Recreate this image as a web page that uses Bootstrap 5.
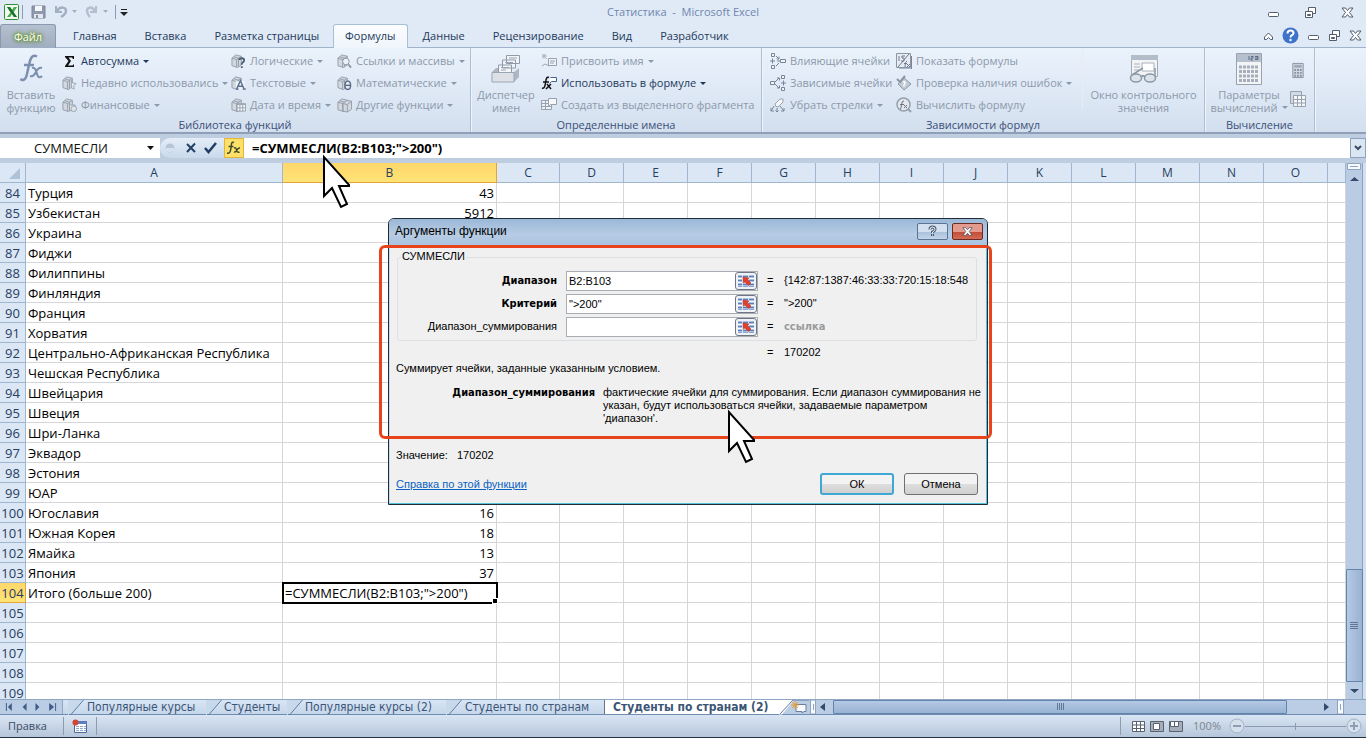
<!DOCTYPE html>
<html lang="ru">
<head>
<meta charset="utf-8">
<meta name="viewport" content="width=device-width, initial-scale=1">
<title>Статистика - Microsoft Excel</title>
<link href="https://cdn.jsdelivr.net/npm/bootstrap@5.3.0/dist/css/bootstrap.min.css" rel="stylesheet">
<style>
  body { font: 11px/16px "Open Sans", "Noto Sans", sans-serif; color: #1e395b; background: #dfeaf6; white-space: nowrap; }
  button, input { font: inherit; color: inherit; border: 0; background: none; padding: 0; }
  svg { display: block; flex: none; }
  a { color: inherit; text-decoration: none; }

  /* title bar and ribbon tabs */
  .titlebar { height: 24px; color: #7186ae; }
  .vline { width: 1px; background: #8d9bb0; }
  .bar-14 { height: 14px; } .bar-18 { height: 18px; }
  .winset { gap: 24px; padding-right: 12px; }
  .tabsrow { height: 24px; border-bottom: 1px solid #9fb4cc; }
  .rtab { height: 24px; line-height: 22px; padding: 0 13px; border: 1px solid transparent; border-bottom: 0; color: #1e395b; }
  .filetab { width: 56px; padding: 0; margin-right: 3px; text-align: center; border-radius: 3px 3px 0 0; color: #fff; border-color: #8a99ae;
    background: linear-gradient(#b5c0d0, #a0adc0); text-shadow: 0 0 3px #5b8a1c, 0 0 4px #5b8a1c, 0 0 5px #6c9a2c; }
  .rtab.current { padding: 0 11px; margin: 0 1px 0 0; background: linear-gradient(#fbfdff, #eff5fc); border-color: #a9bdd4; border-radius: 3px 3px 0 0; }

  /* ribbon */
  .ribbon { height: 86px; background: linear-gradient(#eaf2fb, #dfe9f6 50%, #d3dfee); border-bottom: 2px solid #8f9fb7; }
  .rgroup { border-right: 1px solid #aebfd4; box-shadow: 1px 0 #eef4fb; }
  .rbody { height: 69px; padding-top: 2px; }
  .rname { height: 15px; text-align: center; color: #3a5078; }
  .cmd { display: flex; align-items: center; gap: 4px; height: 22px; color: #8c99aa; }
  .cmd.on { color: #1e395b; }
  .big { display: flex; flex-direction: column; align-items: center; color: #8c99aa; line-height: 13px; }
  .big svg { margin: 3px 0 3px; }
  .arr::after { content: ""; border: 3px solid transparent; border-top-color: currentColor; border-bottom: 0; }
  .c-62 { width: 62px; } .c-170 { width: 169px; } .c-106 { width: 106px; } .c-133 { width: 133px; } .c-70 { width: 70px; } .c-220 { width: 220px; }
  .c-126 { width: 126px; } .c-186 { width: 187px; } .c-120 { width: 121px; } .c-80 { width: 80px; }

  /* formula bar */
  .fbar { height: 29px; background: #bfcde0; padding: 4px 0 5px; }
  .fbar > * { height: 20px; }
  .namebox { width: 160px; background: #fff; font-size: 13px; color: #111; }
  .namebox input { width: 142px; text-align: center; color: #111; }
  .fbtns { width: 84px; gap: 7px; background: linear-gradient(#e4edf8, #c9d9ec); border-right: 1px solid #8ea2bd; border-radius: 10px 0 0 10px; }
  .fxbtn { width: 20px; height: 20px; background: #ffe069; border: 1px solid #e3b53d; }
  .ftext { background: #fff; font-size: 13px; font-weight: 700; color: #000; padding: 0 8px; }
  .expand { border: 1px solid #8fa3be; background: #dbe6f3; }

  /* grid */
  .sheet { font-size: 13px; background: #fff; min-height: 0; }
  .cells { table-layout: fixed; width: 100%; border-collapse: separate; border-spacing: 0; line-height: 18px; color: #000; }
  .cells th { height: 20px; font-weight: 400; text-align: center; color: #27405f; background: #dbe7f5; border-right: 1px solid #9eb6ce; border-bottom: 1px solid #9eb6ce; padding: 1px 0 0; }
  .cells thead th { font-size: 12px; }
  .cells td { height: 20px; border-right: 1px solid #d4d6d9; border-bottom: 1px solid #d4d6d9; padding: 1px 2px 0; }
  .cells .picked { background: linear-gradient(#ffd76b, #ffe376); border-color: #e3a53a; }
  .cells .editing { outline: 2px solid #000; outline-offset: -1px; position: relative; }
  .knob { right: -2px; bottom: -2px; width: 4px; height: 4px; background: #000; border: 1px solid #fff; box-sizing: content-box; }
  .vbar { width: 20px; background: #b9cce4; border-right: 3px solid #d3e0f0; box-shadow: inset -1px 0 #8ba3c2; }
  .thumb { background: linear-gradient(90deg, #b4c9e4, #99b3d3); border: 1px solid #6484ab; border-radius: 1px; }
  .vthumb { height: 113px; }

  /* sheet tabs and status bar */
  .sheetbar { height: 16px; background: #bacde4; color: #3b5577; border-top: 1px solid #8fa7c4; border-bottom: 1px solid #6f8bb0; }
  .sheetnav { width: 63px; border-right: 1px solid #8fa7c4; }
  .stab { color: #3b5577; display: flex; gap: 2px; font: 12px/15px "DejaVu Sans Condensed", sans-serif; background: linear-gradient(#d8e5f4, #c6d7eb); }
  .stab.current { background: #fff; font-weight: 700; }
  .t-143 { width: 143px; } .t-81 { width: 81px; } .t-158 { width: 158px; } .t-160 { width: 160px; } .t-174 { width: 174px; }
  .hthumb { width: 454px; background: linear-gradient(#b4c9e4, #99b3d3); }
  .status { height: 23px; background: linear-gradient(#d9e5f3, #b6c6da); border-bottom: 1px solid #26303f; color: #3b4c66; }
  .zoomline { width: 101px; height: 20px; }
  .zoomtext { color: #7c858f; }

  /* function dialog */
  .dlg { left: 388px; top: 218px; width: 600px; height: 287px; font: 11px/13px "Liberation Sans", sans-serif; color: #000; background: #f0f0f0;
    border: 1px solid #222c38; border-radius: 6px 6px 0 0; box-shadow: inset -1px -1px #53c3dc, inset 1px 0 #c7d9ec; }
  .dlghead { height: 26px; background: linear-gradient(#9bb8d8, #b7cce4 60%, #a9c3e0); border-radius: 5px 5px 0 0; font: 12px/26px "Liberation Sans", sans-serif; padding: 0 4px 2px 6px; }
  .winbtn { width: 31px; height: 17px; border: 1px solid #5b7493; border-radius: 2px; background: linear-gradient(#d2e0ef 50%, #a6bfdb 50%, #c2d5e9); color: #fff; }
  .winbtn.red { background: linear-gradient(#e49a8d 50%, #c24a35 50%, #d36b53); border-color: #6a2b24; }
  .argbox { margin: 12px 10px 0 8px; height: 84px; border: 1px solid #dcdfe4; border-radius: 3px; padding-top: 11px; }
  .arglegend { left: 3px; top: -8px; background: #f0f0f0; padding: 0 1px; }
  .argrow { display: flex; align-items: center; height: 23px; }
  .argrow label, .argdesc b, .argrow .gray { font-family: "DejaVu Sans Condensed", sans-serif; }
  .argrow label { width: 159px; text-align: right; margin-right: 9px; font-weight: 700; }
  .argrow label.opt { font: inherit; }
  .argfield { width: 192px; height: 20px; border: 1px solid #a9adb5; background: #fff; }
  .argfield input { width: 168px; padding: 1px 2px 0; }
  .pick { width: 22px; height: 18px; border: 1px solid #6d7682; border-radius: 3px; background: #eef1f6; }
  .eq { width: 26px; padding-left: 9px; }
  .gray { color: #9b9b9b; font-weight: 700; }
  .argval { width: 187px; overflow: hidden; }
  .total { padding-top: 5px; } .total span:last-child { width: 203px; }
  .note { margin: 3px 7px 0; }
  .argdesc { margin-top: 11px; } .argdesc b { width: 206px; text-align: right; }
  .result { margin: 24px 7px 0; }
  .dlgfoot { margin: 11px 9px 0 7px; gap: 10px; }
  .helplink { color: #0a62c4; text-decoration: underline; }
  .dlgbtn { width: 74px; height: 22px; border: 1px solid #707070; border-radius: 3px; background: linear-gradient(#f3f3f3 50%, #dedede 50%, #d0d0d0); }
  .dlgbtn.main { border: 2px solid #3fa9d4; }
  .frame { left: -10px; top: 26px; width: 613px; height: 194px; border: 3px solid #e8441c; border-radius: 6px; }
  .pointer1 { left: 320px; top: 153px; }
  .pointer2 { left: 725px; top: 408px; }
</style>
</head>
<body>
<svg width="0" height="0" class="position-absolute" aria-hidden="true">
  <symbol id="book" viewBox="0 0 16 16"><path d="M1 5l4-3.500 6 1.500v9l-4 3L1 13z" fill="#d3d8df" stroke="#929daa"/><path d="M1 5l5 1.500v8.500M6 6.500L11 3M3 3.500l5 1.500v9" fill="none" stroke="#929daa"/></symbol>
  <symbol id="wmin" viewBox="0 0 13 13"><rect x="1.500" y="6.500" width="10" height="4" rx="1" fill="#fff" stroke="#535d6c"/></symbol>
  <symbol id="wres" viewBox="0 0 13 13"><path d="M4.500 1.500h7v6h-7z" fill="#fff" stroke="#535d6c"/><path d="M1.500 5.500h7v6h-7zM3.500 8.500h3v1h-3z" fill="#fff" stroke="#535d6c"/></symbol>
  <symbol id="wclose" viewBox="0 0 13 13"><path d="M1 2h3.500l2 2.500 2-2.500H12L8.500 6.500 12 11H8.500l-2-2.500-2 2.500H1l3.500-4.500z" fill="#fff" stroke="#535d6c"/></symbol>
  <symbol id="refpick" viewBox="0 0 16 14"><path d="M0 1h16v12H0z" fill="#fff"/><path d="M0 2.500h16M0 6.500h16M0 10.500h16" stroke="#5f80bd" stroke-width="2"/><path d="M0 12.500h16" stroke="#8fa6d0"/><path d="M4.500 1v12M10.500 1v12" stroke="#d9e2f2"/><path d="M5 3l6 1-1.500 1.500 3.500 3.500-2.500 2.500-3.500-3.500L5.500 9z" fill="#e2402a" stroke="#b42a18" stroke-width=".5"/></symbol>
  <symbol id="mouse" viewBox="0 0 30 56"><path d="M4 4v39l8-8 9 19 6-3-8-18h11z" fill="#fff" stroke="#000" stroke-width="2"/></symbol>
  <symbol id="slant" viewBox="0 0 16 15"><path d="M2 15L15 0H0v15z" fill="#c9d9ec"/><path d="M1 14.500h2L15.500 0" fill="none" stroke="#5f7ca3"/></symbol>
</svg>

<div class="vh-100 d-flex flex-column overflow-hidden position-relative">
  <header class="titlebar d-flex align-items-center position-relative ps-1 flex-shrink-0">
    <svg width="18" height="18" viewBox="0 0 18 18"><rect x="0.500" y="1.500" width="14" height="15" rx="1" fill="#f1f9ee" stroke="#2f8c3a"/><path d="M3 4h3l2 3 2-3h3L9.500 9.500 13 14h-3L8 11l-2 3H3l3.500-4.500z" fill="#45a84a"/><path d="M3 4h3l7 10h-3z" fill="#1c7031"/></svg>
    <span class="vline bar-14 me-2"></span>
    <svg width="15" height="16" viewBox="0 0 15 16"><path d="M1 2h13v12H1z" fill="#8e99ad" stroke="#7c879b"/><path d="M4 2h7v5H4z" fill="#f5f7fa"/><path d="M3 10h9v4H3z" fill="#e3e8ef"/><path d="M5 11h2v3H5z" fill="#8491a5"/></svg>
    <svg class="ms-2" width="26" height="14" viewBox="0 0 26 14"><path d="M2 1v6h6" fill="none" stroke="#a3b0c2" stroke-width="2"/><path d="M3 6c3-5 9-4 9 0 0 3-2 4-5 6" fill="none" stroke="#a3b0c2" stroke-width="2.500"/><path d="M18 5h5l-2.500 3z" fill="#a3b0c2"/></svg>
    <svg class="ms-1" width="27" height="14" viewBox="0 0 27 14"><path d="M12 1v6H6" fill="none" stroke="#b4bfce" stroke-width="2"/><path d="M11 6C8 1 3 2 3 6c0 3 1 4 3 6" fill="none" stroke="#b4bfce" stroke-width="2.500"/><path d="M19 5h5l-2.500 3z" fill="#a3b0c2"/></svg>
    <span class="vline bar-14 mx-1"></span>
    <svg width="8" height="9" viewBox="0 0 8 9"><path d="M1 1.500h6" stroke="#222"/><path d="M0 4h8l-4 4z" fill="#222"/></svg>
    <span class="position-absolute start-50 translate-middle-x">Статистика &nbsp;-&nbsp; Microsoft Excel</span>
    <div class="winset ms-auto d-flex">
      <button aria-label="Свернуть"><svg width="13" height="13"><use href="#wmin"/></svg></button>
      <button aria-label="Восстановить"><svg width="13" height="13"><use href="#wres"/></svg></button>
      <button aria-label="Закрыть"><svg width="13" height="13"><use href="#wclose"/></svg></button>
    </div>
  </header>

  <nav class="tabsrow d-flex flex-shrink-0">
    <button class="rtab filetab">Файл</button>
    <a class="rtab" href="#">Главная</a><a class="rtab" href="#">Вставка</a><a class="rtab" href="#">Разметка страницы</a>
    <a class="rtab current" href="#">Формулы</a><a class="rtab" href="#">Данные</a><a class="rtab" href="#">Рецензирование</a><a class="rtab" href="#">Вид</a><a class="rtab" href="#">Разработчик</a>
    <div class="ms-auto d-flex align-items-center gap-2 pe-1">
      <button aria-label="Свернуть ленту"><svg width="11" height="10" viewBox="0 0 11 10"><path d="M1.500 6L5.500 2 9.500 6v2.500H7.500l-2-2-2 2H1.500z" fill="#fff" stroke="#535d6c"/></svg></button>
      <button aria-label="Справка"><svg width="17" height="17" viewBox="0 0 17 17"><circle cx="8.500" cy="8.500" r="8" fill="#3f73c9"/><path d="M5.500 6.500q0-3 3-3t3 2.500q0 1.500-1.500 2.200T8.500 10.500" fill="none" stroke="#fff" stroke-width="2"/><circle cx="8.500" cy="13" r="1.200" fill="#fff"/></svg></button>
      <button aria-label="Свернуть окно"><svg width="13" height="13"><use href="#wmin"/></svg></button>
      <button aria-label="Восстановить окно"><svg width="13" height="13"><use href="#wres"/></svg></button>
      <button aria-label="Закрыть окно"><svg width="13" height="13"><use href="#wclose"/></svg></button>
    </div>
  </nav>

  <section class="ribbon d-flex flex-shrink-0">
    <div class="rgroup">
      <div class="rbody d-flex">
        <button class="big c-62"><svg width="28" height="32" viewBox="0 0 28 32"><path d="M20 3.500c-5-3-7 3-8 8.500L9.500 23c-1 4-4 5-6 3M7 12h10" fill="none" stroke="#7c8fae" stroke-width="2.500"/><path d="M15 15c3-1 4 2 5 6s3 4 5 2M25 15c-3-1-5 2-6 4s-3 5-6 4" fill="none" stroke="#7c8fae" stroke-width="2"/></svg>Вставить<br>функцию</button>
        <div class="c-170">
          <button class="cmd on arr"><svg width="15" height="15" viewBox="0 0 15 15"><path d="M3 2h9v3h-1l-1-1.500H6.500L9 7l-3 4.500h4.500L12 10v3H3v-1l3.500-5L3 3z" fill="#111"/></svg>Автосумма</button>
          <button class="cmd arr"><svg width="15" height="16" viewBox="0 0 16 16"><use href="#book"/><path d="M10 5l1.500 3 3.500.5-2.500 2.500.5 3.500-3-1.500z" fill="#e6e9ed" stroke="#98a2af"/></svg>Недавно использовались</button>
          <button class="cmd arr"><svg width="15" height="16" viewBox="0 0 16 16"><use href="#book"/><path d="M8 8h6v6H8z" fill="#e6e9ed" stroke="#98a2af"/><circle cx="12.500" cy="12" r="3" fill="#dfe3e8" stroke="#98a2af"/></svg>Финансовые</button>
        </div>
        <div class="c-106">
          <button class="cmd arr"><svg width="15" height="16" viewBox="0 0 16 16"><use href="#book"/><path d="M9 7q0-2 2.500-2T14 7.500q0 1-1.500 2T11.500 12M11.500 13.500v2" fill="none" stroke="#4d6079" stroke-width="2"/></svg>Логические</button>
          <button class="cmd arr"><svg width="15" height="16" viewBox="0 0 16 16"><use href="#book"/><path d="M5 6h10v9H5z" fill="#eef2f7"/><path d="M6 14.500L10 5.500l4 9M7.500 11.500h5M5 14.500h3M12.500 14.500H16" fill="none" stroke="#5b7096" stroke-width="1.500"/></svg>Текстовые</button>
          <button class="cmd arr"><svg width="15" height="16" viewBox="0 0 16 16"><use href="#book"/><path d="M6.500 6.500h9v8h-9z" fill="#f3f5f7" stroke="#98a2af"/><path d="M6 7.500h10M9.500 8v7M12.500 8v7M7 11h9" stroke="#98a2af"/></svg>Дата и время</button>
        </div>
        <div class="c-133">
          <button class="cmd arr"><svg width="15" height="16" viewBox="0 0 16 16"><use href="#book"/><circle cx="9.500" cy="8.500" r="3.500" fill="#eef1f5" stroke="#8d98a8"/><path d="M12 11.500l3 3.500" stroke="#8d98a8" stroke-width="2"/></svg>Ссылки и массивы</button>
          <button class="cmd arr"><svg width="15" height="16" viewBox="0 0 16 16"><use href="#book"/><ellipse cx="11.500" cy="10.500" rx="3" ry="4.500" fill="#e9edf3" stroke="#576b8b" stroke-width="1.500"/><path d="M9 10.500h5" stroke="#576b8b" stroke-width="1.500"/></svg>Математические</button>
          <button class="cmd arr"><svg width="15" height="16" viewBox="0 0 16 16"><use href="#book"/><path d="M6.500 6.500l4-3.500 5 1v8.500L11 15.500l-4.500-1zM6.500 6.500l4.500 1v8M11 7.500L15.500 4" fill="#d3d8df" stroke="#929daa"/></svg>Другие функции</button>
        </div>
      </div>
      <div class="rname">Библиотека функций</div>
    </div>

    <div class="rgroup">
      <div class="rbody d-flex">
        <button class="big c-70"><svg width="30" height="32" viewBox="0 0 30 32"><path d="M15.500 2.500h13v8h-13zM11.500 7h13v8h-13zM7.500 12h13v8h-13z" fill="#f3f5f8" stroke="#8f9bab"/><path d="M18 5h8M14 9.500h8M10 14.500h8M10 17h5" stroke="#9aa5b3"/><path d="M1 19l4-4h2v5h15l6-5v9l-5 5H1z" fill="#aeb8c5"/><path d="M1 19.500h22V29H1z" fill="#dde1e7" stroke="#9aa5b3"/></svg>Диспетчер<br>имен</button>
        <div class="c-220">
          <button class="cmd arr"><svg width="16" height="16" viewBox="0 0 16 16"><path d="M3 1v5M1 3h5M1 1l5 5M5 1L1 5" stroke="#a2acb9" stroke-width=".8"/><path d="M7.500 5.500h8v7h-8zM1 13l3-2 4 2" fill="#f0f3f7" stroke="#98a2af"/><path d="M9 8h5M9 10h4" stroke="#98a2af"/></svg>Присвоить имя</button>
          <button class="cmd on arr"><svg width="16" height="16" viewBox="0 0 16 16"><path d="M8 2.500C5 1.500 5 5 4.500 8s-1 6-3.500 5M2 7h6" fill="none" stroke="#111" stroke-width="1.500"/><path d="M6 9l4 5M10 9l-5 5" stroke="#111" stroke-width="1.500"/><path d="M9.500 2.500h6v4h-5l-2 2" fill="#fff" stroke="#45628f"/></svg>Использовать в формуле</button>
          <button class="cmd"><svg width="16" height="16" viewBox="0 0 16 16"><path d="M.5 3.500h10v9H.5zM0 6.500h11M0 9.500h11M4.500 3v10" fill="#eef1f5" stroke="#98a2af"/><path d="M7.500 1.500h8v6h-6l-2 2z" fill="#f6f8fa" stroke="#98a2af"/></svg>Создать из выделенного фрагмента</button>
        </div>
      </div>
      <div class="rname">Определенные имена</div>
    </div>

    <div class="rgroup">
      <div class="rbody d-flex ps-2">
        <div class="c-126">
          <button class="cmd gap-1"><svg width="16" height="16" viewBox="0 0 16 16"><path d="M1.500.5h3v3h-3zM1.500 12.500h3v3h-3zM10.500 6.500h5v3h-5z" fill="#f0f3f7" stroke="#77859a"/><path d="M0 8h5M2.500 5.500v5M6 3l3 3M9 3.500V6H6.500M6 13l3-3M7 8h3" fill="none" stroke="#77859a"/></svg>Влияющие ячейки</button>
          <button class="cmd gap-1"><svg width="16" height="16" viewBox="0 0 16 16"><path d="M11.500.5h3v3h-3zM11.500 12.500h3v3h-3zM.5 6.500h4v3h-4z" fill="#f0f3f7" stroke="#77859a"/><path d="M11 8h5M13.500 5.500v5M5 7l4-4M7 3h2.500v2.500M5 9l4 4M9.500 10.500V13H7" fill="none" stroke="#77859a"/></svg>Зависимые ячейки</button>
          <button class="cmd gap-1 arr"><svg width="16" height="16" viewBox="0 0 16 16"><path d="M5 7l5-5 3 0 0 3-5 5q-3 0-3-3z" fill="#f3f5f7" stroke="#98a2af"/><path d="M4 9l-3 5M1 11v3h3M7 11v4M5.500 13.500L7 15l1.500-1.500M10 9l4 5M14 11v3h-3" fill="none" stroke="#77859a"/></svg>Убрать стрелки</button>
        </div>
        <div class="c-186 border-end border-secondary-subtle mb-2">
          <button class="cmd"><svg width="16" height="16" viewBox="0 0 16 16"><path d="M.5.500h14v14H.5z" fill="#e8ecf1" stroke="#8a96a7"/><path d="M2 14L13 1M3 3v5M6 3h3M6 3v2h2v3H5" fill="none" stroke="#6d7b91"/><path d="M11 8q-2 0-2 6M8 10.500h3M11 11l3 3M14 11l-3 3" fill="none" stroke="#6d7b91"/><path d="M15.500 3v13H3" fill="none" stroke="#77859a"/></svg>Показать формулы</button>
          <button class="cmd arr"><svg width="16" height="16" viewBox="0 0 16 16"><path d="M8 3l7 6-7 6-6-6z" fill="#c3cad3" stroke="#8a96a7"/><path d="M1 4l3 3 5-6" fill="none" stroke="#8a96a7" stroke-width="2"/><path d="M7 7q2-1 2 .5T8 10v1.500" fill="none" stroke="#fff" stroke-width="1.500"/></svg>Проверка наличия ошибок</button>
          <button class="cmd"><svg width="16" height="16" viewBox="0 0 16 16"><circle cx="7.500" cy="7.500" r="6.500" fill="#e4e8ed" stroke="#97a1ae" stroke-width="1.500"/><path d="M12 12l3 3" stroke="#97a1ae" stroke-width="2"/><path d="M8 4q-2-1-2.500 4T4 12M4 7.500h4M8 8l3 3M11 8l-3 3" fill="none" stroke="#66748a"/></svg>Вычислить формулу</button>
        </div>
        <button class="big c-120"><svg width="30" height="32" viewBox="0 0 30 32"><path d="M2.500 2.500h26v21h-26z" fill="#f2f4f6" stroke="#a2abb7"/><path d="M2 2h27v5H2z" fill="#b3bcc9"/><path d="M5 11h6M5 14h6M5 17h5M13 10h12v8H13z" fill="#fff" stroke="#a9b2bd"/><ellipse cx="7" cy="25" rx="5.500" ry="4" fill="#dde3ea" stroke="#8c97a6" stroke-width="1.500"/><ellipse cx="21" cy="25" rx="5.500" ry="4" fill="#dde3ea" stroke="#8c97a6" stroke-width="1.500"/><path d="M12 24q2-3 4 0M3 22l11-7M26 23V15" fill="none" stroke="#8c97a6" stroke-width="1.500"/></svg>Окно контрольного<br>значения</button>
      </div>
      <div class="rname">Зависимости формул</div>
    </div>

    <div class="rgroup">
      <div class="rbody d-flex ps-1">
        <button class="big c-80"><svg width="26" height="32" viewBox="0 0 26 32"><path d="M.5.500h25v31H.5z" fill="#f3f4f6" stroke="#98a2af"/><path d="M1 1h24v8H1z" fill="#b5bfcd"/><path d="M13 3v4M15 3.500h2v1.500h-2V7h2M19 3.500h3v3h-3M19 5h3" fill="none" stroke="#5c6b84"/><path d="M3 14h20M3 18.500h20M3 23h20M3 27.500h20" stroke="#a5aeba" stroke-width="3" stroke-dasharray="3 1"/></svg>Параметры<span class="d-flex align-items-center gap-1 arr">вычислений</span></button>
        <div class="d-flex flex-column align-items-center gap-2 pt-2 pe-2">
          <button class="pt-1 pb-1" aria-label="Пересчет"><svg width="14" height="17" viewBox="0 0 14 18"><path d="M1.500 1.500h11v15h-11z" fill="#d3d9e1" stroke="#8593a6"/><path d="M3 3h8v3H3z" fill="#9faaba"/><path d="M3 8.500h8M3 11.500h8M3 14.500h8" stroke="#8793a6" stroke-width="2" stroke-dasharray="2 1"/></svg></button>
          <button aria-label="Вычисления на листе"><svg width="17" height="17" viewBox="0 0 17 17"><path d="M1.500.5h11v12h-11z" fill="#d3d9e1" stroke="#98a2af"/><path d="M4.500 4.500h12v11h-12z" fill="#f6f7f9" stroke="#98a2af"/><path d="M4 8.500h12M4 12h12M8.500 5v11M12.500 5v11" stroke="#98a2af"/></svg></button>
        </div>
      </div>
      <div class="rname">Вычисление</div>
    </div>
  </section>

  <div class="fbar d-flex flex-shrink-0">
    <div class="namebox d-flex align-items-center"><input aria-label="Имя" value="СУММЕСЛИ"><button aria-label="Список имен"><svg width="18" height="8" viewBox="0 0 18 8"><path d="M5 2h7l-3.500 4z" fill="#111"/></svg></button></div>
    <div class="fbtns d-flex align-items-center ps-1">
      <svg width="14" height="12" viewBox="0 0 14 12"><circle cx="6" cy="6" r="4.500" fill="#b6c5d8"/><path d="M2 6h8v3q-4 2-8 0z" fill="#d7e2ef"/></svg>
      <button aria-label="Отмена ввода"><svg width="12" height="12" viewBox="0 0 12 12"><path d="M2 2l8 8M10 1.500L2 10" stroke="#233f66" stroke-width="2"/></svg></button>
      <button aria-label="Ввод"><svg width="13" height="12" viewBox="0 0 13 12"><path d="M1 6l3.500 4L12 1" fill="none" stroke="#233f66" stroke-width="2.500"/></svg></button>
      <button class="fxbtn ms-auto" aria-label="Вставить функцию"><svg width="18" height="18" viewBox="0 0 18 18"><path d="M9 3.500C6 2 6.500 6 6 9s-1 6-4 5M3.500 7.500h5M9 9q2-1 2.500 2t3 2M15 9q-2-.5-3 2t-3 2" fill="none" stroke="#3c4c2c" stroke-width="1.500"/></svg></button>
    </div>
    <input class="ftext flex-grow-1" aria-label="Строка формул" value='=СУММЕСЛИ(B2:B103;"&gt;200")'>
    <button class="expand" aria-label="Развернуть строку формул"><svg width="14" height="14" viewBox="0 0 14 14"><path d="M4 5l3 3 3-3" fill="none" stroke="#3c4b61" stroke-width="2"/></svg></button>
  </div>

  <main class="sheet d-flex flex-grow-1 overflow-hidden">
    <div class="flex-grow-1 overflow-hidden">
      <table class="cells">
        <colgroup id="cols"></colgroup>
        <thead><tr id="heads"></tr></thead>
        <tbody id="rows"></tbody>
      </table>
    </div>
    <div class="vbar d-flex flex-column align-items-center">
      <svg width="17" height="20" viewBox="0 0 17 20"><path d="M1.500.5h13v6h-13z" fill="#f6f9fd" stroke="#8fa3be"/><path d="M4 3.500h8" stroke="#8fa3be"/><path d="M4 18h9l-4.500-4z" fill="#33496e"/></svg>
      <div class="thumb vthumb w-100 mt-auto d-flex align-items-center justify-content-center"><svg width="9" height="9" viewBox="0 0 9 9"><path d="M0 1.500h8M0 3.500h8M0 5.500h8M0 7.500h8" stroke="#5f7696"/></svg></div>
      <svg width="17" height="17" viewBox="0 0 17 17"><path d="M4 7h9l-4.500 4z" fill="#33496e"/></svg>
    </div>
  </main>

  <div class="sheetbar d-flex flex-shrink-0">
    <svg class="sheetnav" height="14" viewBox="0 0 63 14"><path d="M6.500 3v8M56.500 3v8" stroke="#3f5c86"/><path d="M12 3v8L8 7zM27 3v8l-4-4zM36 3v8l4-4zM50 3v8l5-4z" fill="#3f5c86"/></svg>
    <nav class="d-flex">
      <a class="stab t-143" href="#"><svg class="ms-1" width="18" height="15"><use href="#slant"/></svg>Популярные курсы</a>
      <a class="stab t-81" href="#"><svg width="16" height="15"><use href="#slant"/></svg>Студенты</a>
      <a class="stab t-158" href="#"><svg width="16" height="15"><use href="#slant"/></svg>Популярные курсы (2)</a>
      <a class="stab t-160 border-end border-secondary" href="#"><svg width="18" height="15"><use href="#slant"/></svg>Студенты по странам</a>
      <a class="stab current t-174 ps-2" href="#">Студенты по странам (2)</a>
      <button aria-label="Вставить лист"><svg width="30" height="15" viewBox="0 0 30 15"><path d="M0 0h15L3 14.500H0z" fill="#fff"/><path d="M1 14L14 0h16" fill="none" stroke="#5f7ca3"/><path d="M17 4.500h10v7h-2l-2 1.500v-1.500h-6z" fill="#f7f9fc" stroke="#6b7f9d"/><path d="M16 1v8M12 5h8M13 2l6 6M19 2l-6 6" stroke="#e9a032"/></svg></button>
    </nav>
    <div class="flex-grow-1 d-flex">
      <svg width="24" height="14" viewBox="0 0 24 14"><path d="M1.500 0h5v14h-5z" fill="#f6f9fd" stroke="#8fa3be"/><path d="M4.500 4v6" stroke="#8fa3be"/><path d="M16 3v8l-5-4z" fill="#33496e"/></svg>
      <div class="thumb hthumb d-flex align-items-center justify-content-center"><svg width="9" height="8" viewBox="0 0 9 8"><path d="M1.500 0v7M3.500 0v7M5.500 0v7M7.500 0v7" stroke="#5f7696"/></svg></div>
      <svg class="ms-auto me-3 pe-1" width="27" height="14" viewBox="0 0 23 14"><path d="M1 3v8l5-4z" fill="#33496e"/><path d="M14.500 0h6v14h-6z" fill="#f6f9fd" stroke="#8fa3be"/><path d="M17.500 4v6" stroke="#8fa3be"/></svg>
    </div>
  </div>

  <footer class="status d-flex align-items-center flex-shrink-0 ps-2">
    <span>Правка</span>
    <span class="vline bar-18 ms-3 me-2"></span>
    <button aria-label="Запись макроса"><svg width="16" height="15" viewBox="0 0 16 15"><path d="M2.500 2.500h12v11h-12z" fill="#fff" stroke="#4c6a9b"/><path d="M2 3.500h13" stroke="#5a7fc0" stroke-width="3"/><path d="M4 7.500h10M4 9.500h10M4 11.500h10" stroke="#8fa7cc" stroke-dasharray="3 1"/><circle cx="3.500" cy="3.500" r="3" fill="#d2452f"/></svg></button>
    <span class="vline bar-18 ms-2"></span>
    <span class="vline bar-18 ms-auto me-2"></span>
    <svg width="56" height="13" viewBox="0 0 56 13"><path d="M3.500 1.500h12v10h-12zM3 5h13M3 8.500h13M7.500 1v11M11.500 1v11" fill="#fff" stroke="#59636f"/><path d="M21.500 1.500h13v10h-13z" fill="#a5aeb9" stroke="#59636f"/><path d="M24.500 3.500h6v6h-6z" fill="#fff" stroke="#59636f"/><path d="M40.500 1.500h13v10h-13z" fill="#a5aeb9" stroke="#59636f"/><path d="M41.500 1.500h4v5h-4zM45.500 1.500h4v5h-4z" fill="#fff" stroke="#59636f"/></svg>
    <span class="zoomtext mx-2">100%</span>
    <svg width="16" height="16" viewBox="0 0 16 16"><circle cx="8" cy="8" r="7" fill="#d6e0ec" stroke="#a2b2c6"/><path d="M4 8h8" stroke="#8d9db2" stroke-width="2"/></svg>
    <svg class="zoomline" viewBox="0 0 101 20"><path d="M0 10.500h101" stroke="#8999af"/><path d="M50.500 7v7" stroke="#8999af"/></svg>
    <svg width="20" height="16" viewBox="0 0 20 16"><circle cx="8" cy="8" r="7" fill="#d6e0ec" stroke="#a2b2c6"/><path d="M4 8h8M8 4v8" stroke="#8d9db2" stroke-width="2"/></svg>
  </footer>

  <div class="dlg position-absolute" role="dialog" aria-label="Аргументы функции">
    <div class="dlghead d-flex align-items-center gap-1">
      <span class="me-auto">Аргументы функции</span>
      <button class="winbtn d-flex align-items-center justify-content-center" aria-label="Справка"><svg width="11" height="12" viewBox="0 0 11 12"><path d="M3 4.500Q3 2 5.500 2T8 4.500Q8 5.500 5.500 7v1M5.500 9v2" fill="none" stroke="#4b5a70" stroke-width="3"/><path d="M3 4.500Q3 2 5.500 2T8 4.500Q8 5.500 5.500 7v1M5.500 9.500v1" fill="none" stroke="#fff"/></svg></button>
      <button class="winbtn red d-flex align-items-center justify-content-center" aria-label="Закрыть"><svg width="11" height="11" viewBox="0 0 13 13"><use href="#wclose"/></svg></button>
    </div>
    <div class="argbox position-relative">
      <span class="arglegend position-absolute">СУММЕСЛИ</span>
      <div class="argrow"><label for="a1">Диапазон</label><div class="argfield d-flex"><input id="a1" value="B2:B103"><button class="pick d-flex align-items-center justify-content-center" aria-label="Выбрать диапазон"><svg width="16" height="14"><use href="#refpick"/></svg></button></div><span class="eq">=</span><span class="argval">{142:87:1387:46:33:33:720:15:18:548</span></div>
      <div class="argrow"><label for="a2">Критерий</label><div class="argfield d-flex"><input id="a2" value='"&gt;200"'><button class="pick d-flex align-items-center justify-content-center" aria-label="Выбрать критерий"><svg width="16" height="14"><use href="#refpick"/></svg></button></div><span class="eq">=</span><span class="argval">"&gt;200"</span></div>
      <div class="argrow"><label class="opt" for="a3">Диапазон_суммирования</label><div class="argfield d-flex"><input id="a3"><button class="pick d-flex align-items-center justify-content-center" aria-label="Выбрать диапазон суммирования"><svg width="16" height="14"><use href="#refpick"/></svg></button></div><span class="eq">=</span><span class="gray">ссылка</span></div>
    </div>
    <div class="total d-flex justify-content-end"><span class="eq">=</span><span>170202</span></div>
    <p class="note">Суммирует ячейки, заданные указанным условием.</p>
    <div class="argdesc d-flex gap-2"><b>Диапазон_суммирования</b><span>фактические ячейки для суммирования. Если диапазон суммирования не<br>указан, будут использоваться ячейки, задаваемые параметром<br>'диапазон'.</span></div>
    <p class="result">Значение: &nbsp; 170202</p>
    <div class="dlgfoot d-flex align-items-center">
      <a class="helplink me-auto" href="#">Справка по этой функции</a>
      <button class="dlgbtn main">ОК</button><button class="dlgbtn">Отмена</button>
    </div>
    <div class="frame position-absolute pe-none"></div>
  </div>
  <svg class="pointer1 position-absolute pe-none" width="30" height="56"><use href="#mouse"/></svg>
  <svg class="pointer2 position-absolute pe-none" width="30" height="56"><use href="#mouse"/></svg>
</div>

<script src="https://cdn.jsdelivr.net/npm/bootstrap@5.3.0/dist/js/bootstrap.bundle.min.js"></script>
<script>
  const widths = [26, 257, 214, 63, 64, 64, 64, 64, 64, 64, 64, 64, 64, 64, 64, 64];
  const letters = ["", ..."ABCDEFGHIJKLMNO", ""];
  const data = [["Турция", 43], ["Узбекистан", 5912], ["Украина", ""], ["Фиджи", ""], ["Филиппины", ""], ["Финляндия", ""], ["Франция", ""], ["Хорватия", ""],
    ["Центрально-Африканская Республика", ""], ["Чешская Республика", ""], ["Швейцария", ""], ["Швеция", ""], ["Шри-Ланка", ""], ["Эквадор", ""], ["Эстония", ""], ["ЮАР", ""],
    ["Югославия", 16], ["Южная Корея", 18], ["Ямайка", 13], ["Япония", 37], ["Итого (больше 200)", '=СУММЕСЛИ(B2:B103;"&gt;200")']];
  const corner = '<svg class="ms-auto me-1" width="14" height="13"><path d="M13 1v11H2z" fill="#b0c2d8"/></svg>';
  document.getElementById("cols").innerHTML = widths.map(w => `<col style="width:${w}px">`).join("") + "<col>";
  document.getElementById("heads").innerHTML = letters.map((l, i) => `<th class="${l === "B" ? "picked" : ""}">${i ? l : corner}</th>`).join("");
  let html = "";
  for (let n = 84; n < 110; n++) {
    const [a, b] = data[n - 84] || ["", ""];
    const cell = n === 104 ? `<td class="editing">${b}<span class="knob position-absolute"></span></td>` : `<td class="text-end">${b}</td>`;
    html += `<tr><th class="${n === 104 ? "picked" : ""}">${n}</th><td>${a}</td>${cell}${"<td></td>".repeat(14)}</tr>`;
  }
  document.getElementById("rows").innerHTML = html;
</script>
</body>
</html>
